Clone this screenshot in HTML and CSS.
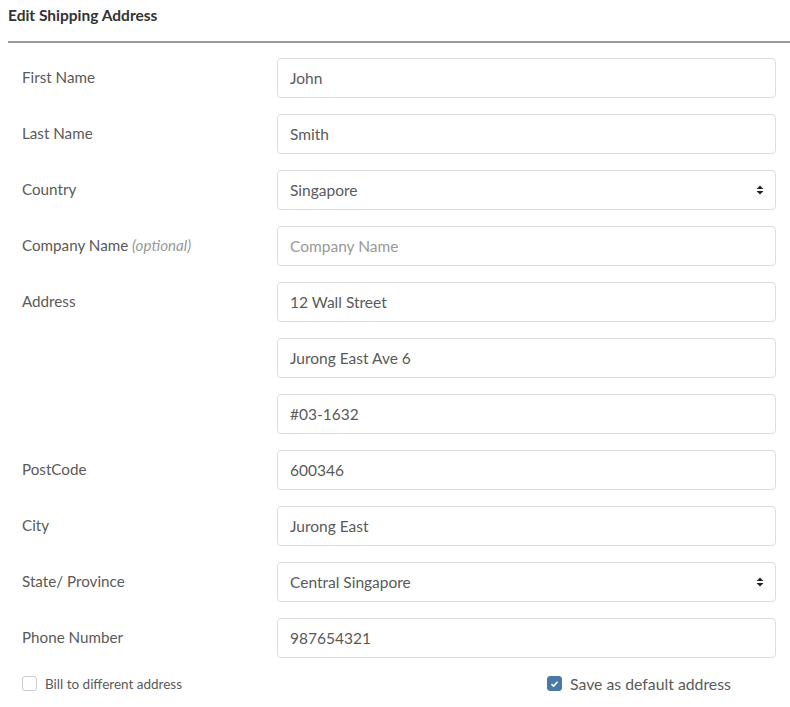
FILE: index.html
```html
<!DOCTYPE html>
<html>
  <head>
    <meta http-equiv="Content-Type" content="text/html; charset=UTF-8" />
    <title>Edit Shipping Address</title>
    <link rel="stylesheet" href="styles.css">
  </head>
  <body>
    <div class="page">
      <h3 class="title">Edit Shipping Address</h3>
      <form class="address-form">
        <div class="row">
          <label class="label">First Name</label>
          <input class="field" type="text" value="John" />
        </div>
        <div class="row">
          <label class="label">Last Name</label>
          <input class="field" type="text" value="Smith" />
        </div>
        <div class="row">
          <label class="label">Country</label>
          <div class="select">
            <span>Singapore</span>
            <svg class="arrows" width="8" height="10" viewBox="0 0 8 10">
              <path d="M4 0.5 L7.5 4 L0.5 4 Z M4 9.5 L7.5 6 L0.5 6 Z" fill="#222" />
            </svg>
          </div>
        </div>
        <div class="row">
          <label class="label">Company Name <em class="optional">(optional)</em></label>
          <input class="field" type="text" placeholder="Company Name" />
        </div>
        <div class="row">
          <label class="label">Address</label>
          <input class="field" type="text" value="12 Wall Street" />
        </div>
        <div class="row">
          <span class="label"></span>
          <input class="field" type="text" value="Jurong East Ave 6" />
        </div>
        <div class="row">
          <span class="label"></span>
          <input class="field" type="text" value="#03-1632" />
        </div>
        <div class="row">
          <label class="label">PostCode</label>
          <input class="field" type="text" value="600346" />
        </div>
        <div class="row">
          <label class="label">City</label>
          <input class="field" type="text" value="Jurong East" />
        </div>
        <div class="row">
          <label class="label">State/ Province</label>
          <div class="select">
            <span>Central Singapore</span>
            <svg class="arrows" width="8" height="10" viewBox="0 0 8 10">
              <path d="M4 0.5 L7.5 4 L0.5 4 Z M4 9.5 L7.5 6 L0.5 6 Z" fill="#222" />
            </svg>
          </div>
        </div>
        <div class="row">
          <label class="label">Phone Number</label>
          <input class="field" type="text" value="987654321" />
        </div>
        <div class="checks">
          <label class="check check-small">
            <span class="box"></span>
            Bill to different address
          </label>
          <label class="check">
            <span class="box checked">
              <svg width="9" height="8" viewBox="0 0 9 8">
                <path d="M1.5 4.2 L3.6 6.2 L7.5 1.8" fill="none" stroke="white" stroke-width="1.6" />
              </svg>
            </span>
            Save as default address
          </label>
        </div>
      </form>
    </div>
  </body>
</html>
```

FILE: styles.css
```css
body {
  margin: 0;
  background-color: white;
  color: #444;
  font-family: Lato, "Open Sans", sans-serif;
}

.page {
  padding-left: 8px;
}

.title {
  margin: 0;
  padding-top: 6px;
  height: 43px;
  box-sizing: border-box;
  font-size: 15.5px;
  font-weight: 700;
  color: #333;
  border-bottom: 2px solid #999;
}

.address-form {
  padding-top: 15px;
}

.row {
  display: flex;
  align-items: center;
  height: 40px;
  margin-bottom: 16px;
  padding-left: 14px;
}

.label {
  width: 255px;
  font-size: 15.2px;
  color: #5a5a5a;
  margin-top: -2px;
}

.optional {
  color: #999;
}

.field,
.select {
  box-sizing: border-box;
  width: 499px;
  height: 40px;
  border: 1px solid #ddd;
  border-radius: 4px;
  padding: 0 12px;
  font-family: Lato, "Open Sans", sans-serif;
  font-size: 15.5px;
  color: #5a5a5a;
  background-color: white;
}

.field::placeholder {
  color: #999;
}

.select {
  display: flex;
  align-items: center;
  justify-content: space-between;
}

.arrows {
  margin-right: -1px;
}

.checks {
  display: flex;
  padding-left: 14px;
  margin-top: 14px;
}

.check {
  display: flex;
  align-items: center;
  gap: 8px;
  font-size: 15.8px;
  color: #5a5a5a;
  margin-left: 270px;
}

.check-small {
  font-size: 13.5px;
  margin-left: 0;
  width: 255px;
}

.box {
  box-sizing: border-box;
  width: 15px;
  height: 15px;
  border: 1px solid #ccc;
  border-radius: 3px;
  display: flex;
  align-items: center;
  justify-content: center;
}

.box.checked {
  background-color: #4a79a5;
  border-color: #4a79a5;
}
```
